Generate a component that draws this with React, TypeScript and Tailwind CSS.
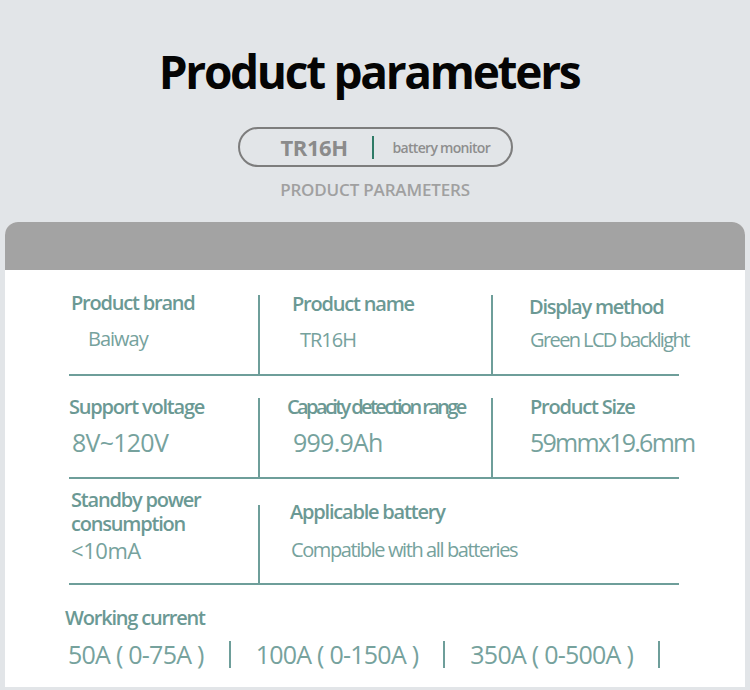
import React from 'react';

const teal = 'text-[#6b9994]';

const Divider: React.FC<{ top: string }> = ({ top }) => (
  <div className={`w-[2px] shrink-0 self-stretch bg-[#6e9e9a] ${top}`} />
);

const Label: React.FC<{ children: React.ReactNode; className?: string }> = ({ children, className = '' }) => (
  <div className={`text-[20px] leading-[24px] font-semibold whitespace-nowrap ${teal} ${className}`}>{children}</div>
);

const Value: React.FC<{ children: React.ReactNode; className?: string }> = ({ children, className = '' }) => (
  <div className={`font-normal whitespace-nowrap text-[#76a29d] ${className}`}>{children}</div>
);

const App: React.FC = () => {
  const currents = ['50A ( 0-75A )', '100A ( 0-150A )', '350A ( 0-500A )'];

  return (
    <div className="w-[750px] h-[690px] bg-[#e2e5e8] flex flex-col items-center overflow-hidden font-['Open_Sans',sans-serif]">
      {/* heading */}
      <h1 className="mt-[49px] ml-[-12px] text-[46px] leading-[45px] font-bold tracking-[-0.05em] text-[#050505]">
        Product parameters
      </h1>

      <div className="mt-[33px] w-[275px] h-[40px] rounded-full border-2 border-[#7d7d7d] flex items-center pl-[41px]">
        <span className="text-[22px] font-bold tracking-[-0.02em] text-[#8b8b8b]">TR16H</span>
        <span className="ml-[24px] w-[2px] h-[23px] bg-[#2e7a66]" />
        <span className="ml-[19px] text-[14px] font-semibold tracking-[-0.05em] text-[#8e8e8e]">battery monitor</span>
      </div>

      <div className="mt-[12px] text-[17px] leading-[22px] font-semibold tracking-[-0.01em] text-[#a0a0a0]">PRODUCT PARAMETERS</div>

      {/* card */}
      <div className="mt-[21px] w-[740px] h-[465px] rounded-t-[13px] overflow-hidden bg-white flex flex-col">
        <div className="h-[48px] bg-[#a3a3a3] shrink-0" />

        <div className="pl-[64px] pt-[20px] flex flex-col">
          {/* row 1 */}
          <div className="w-[610px] h-[86px] flex border-b-2 border-[#6e9e9a]">
            <div className="w-[189px] shrink-0 pt-[1px]">
              <Label className="pl-[2px] tracking-[-0.06em]">Product brand</Label>
              <Value className="pl-[19px] mt-[11px] text-[20px] leading-[26px] tracking-[-0.05em]">Baiway</Value>
            </div>
            <Divider top="mt-[5px]" />
            <div className="w-[231px] shrink-0 pt-[1px]">
              <Label className="pl-[32px] pt-[1px] tracking-[-0.06em]">Product name</Label>
              <Value className="pl-[40px] mt-[11px] text-[20px] leading-[26px] tracking-[-0.05em]">TR16H</Value>
            </div>
            <Divider top="mt-[5px]" />
            <div className="flex-1 pt-[1px]">
              <Label className="pl-[36px] pt-[4px] tracking-[-0.06em]">Display method</Label>
              <Value className="pl-[37px] mt-[8px] text-[20px] leading-[26px] tracking-[-0.08em]">Green LCD backlight</Value>
            </div>
          </div>

          {/* row 2 */}
          <div className="w-[610px] h-[103px] flex border-b-2 border-[#6e9e9a]">
            <div className="w-[189px] shrink-0 pt-[19px]">
              <Label className="tracking-[-0.06em]">Support voltage</Label>
              <Value className="pl-[3px] mt-[8px] text-[25px] leading-[30px] tracking-[-0.03em]">8V~120V</Value>
            </div>
            <Divider top="mt-[22px]" />
            <div className="w-[231px] shrink-0 pt-[19px]">
              <Label className="pl-[27px] tracking-[-0.13em]">Capacity detection range</Label>
              <Value className="pl-[33px] mt-[8px] text-[25px] leading-[30px] tracking-[-0.03em]">999.9Ah</Value>
            </div>
            <Divider top="mt-[22px]" />
            <div className="flex-1 pt-[19px]">
              <Label className="pl-[37px] tracking-[-0.06em]">Product Size</Label>
              <Value className="pl-[37px] mt-[8px] text-[25px] leading-[30px] tracking-[-0.07em]">59mmx19.6mm</Value>
            </div>
          </div>

          {/* row 3 */}
          <div className="w-[610px] h-[106px] flex border-b-2 border-[#6e9e9a]">
            <div className="w-[189px] shrink-0 pt-[9px] pl-[2px]">
              <Label className="tracking-[-0.06em]">Standby power</Label>
              <Label className="tracking-[-0.06em] leading-[23px]">consumption</Label>
              <Value className="text-[22px] leading-[22px] pt-[3px] tracking-[-0.02em]">&lt;10mA</Value>
            </div>
            <Divider top="mt-[26px]" />
            <div className="flex-1 pt-[21px]">
              <Label className="pl-[30px] tracking-[-0.06em]">Applicable battery</Label>
              <Value className="pl-[31px] mt-[13px] text-[20px] leading-[26px] tracking-[-0.07em]">Compatible with all batteries</Value>
            </div>
          </div>
        </div>

        {/* working current */}
        <div className="pl-[60px] pt-[21px]">
          <Label className="tracking-[-0.06em]">Working current</Label>
          <div className="mt-[9px] flex items-center text-[25px] leading-[30px] font-normal text-[#76a29d] tracking-[-0.03em]">
            {currents.map((c, i) => (
              <React.Fragment key={c}>
                <span className={i === 0 ? 'ml-[3px]' : 'ml-[25px]'}>{c}</span>
                <span className="ml-[25px] w-[2px] h-[27px] bg-[#6e9e9a]" />
              </React.Fragment>
            ))}
          </div>
        </div>
      </div>
    </div>
  );
};

export default App;
